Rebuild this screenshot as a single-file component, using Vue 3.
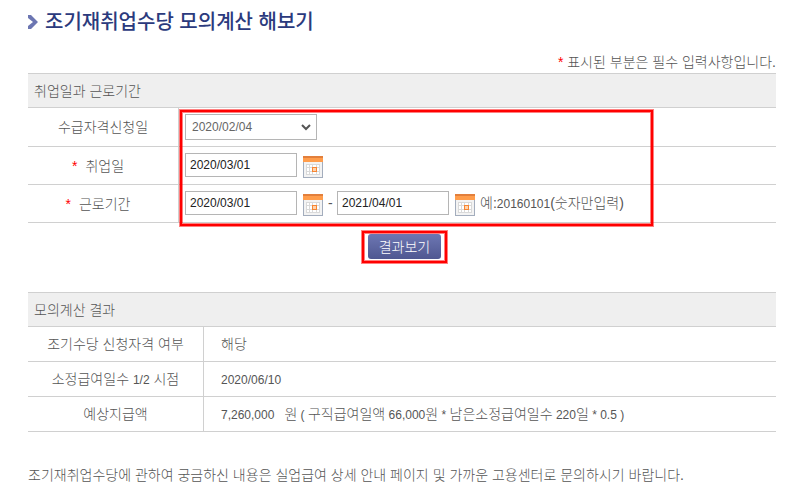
<script setup>
import { ref, h } from 'vue'

const applyDate = ref('2020/02/04')
const hireDate = ref('2020/03/01')
const workStart = ref('2020/03/01')
const workEnd = ref('2021/04/01')

const gridLines = [
  ...[3, 6, 9, 13, 16].map((x) => h('rect', { x, y: 8, width: 1, height: 11 })),
  ...[8, 11, 15, 18].map((y) => h('rect', { x: 3, y, width: 14, height: 1 }))
]

const CalendarIcon = () =>
  h('svg', { class: 'cal-icon', width: 20, height: 22, viewBox: '0 0 20 22', 'shape-rendering': 'crispEdges', 'aria-hidden': 'true' }, [
    h('rect', { width: 20, height: 22, fill: '#a3adbd' }),
    h('rect', { x: 1, y: 6, width: 18, height: 15, fill: '#f3f3f3' }),
    h('rect', { x: 3, y: 8, width: 14, height: 11, fill: '#ffffff' }),
    h('g', { fill: '#d9d9d9' }, gridLines),
    h('rect', { width: 20, height: 6, fill: '#ff9d4c' }),
    h('rect', { width: 20, height: 2, fill: '#e27f3c' }),
    h('rect', { x: 9, y: 11, width: 5, height: 5, fill: '#f78532' }),
    h('rect', { x: 10, y: 12, width: 3, height: 3, fill: '#ffd3ac' })
  ])
</script>

<template>
  <main class="page">
    <h1 class="title">
      <svg class="chevron" width="10" height="14" viewBox="0 0 10 14" aria-hidden="true">
        <path d="M0 0H3L10 7L3 14H0V11L5 7L0 3Z" fill="#6c76b2" />
      </svg>
      조기재취업수당 모의계산 해보기
    </h1>

    <p class="notice"><span class="star">*</span> 표시된 부분은 필수 입력사항입니다.</p>

    <form @submit.prevent>
      <div class="fields">
        <table class="grid form-grid">
          <thead>
            <tr><th colspan="2" class="head">취업일과 근로기간</th></tr>
          </thead>
          <tbody>
            <tr class="first">
              <th><label for="apply">수급자격신청일</label></th>
              <td>
                <div class="select-box">
                  <select id="apply" v-model="applyDate">
                    <option>2020/02/04</option>
                  </select>
                  <svg class="arrow" width="10" height="7" viewBox="0 0 10 7" aria-hidden="true">
                    <path d="M1 1L5 5L9 1" fill="none" stroke="#555" stroke-width="2" />
                  </svg>
                </div>
              </td>
            </tr>
            <tr>
              <th class="required"><span class="star">*</span><label for="hire">취업일</label></th>
              <td>
                <div class="line">
                  <input id="hire" v-model="hireDate" type="text" />
                  <button type="button" class="cal" aria-label="취업일 선택"><CalendarIcon /></button>
                </div>
              </td>
            </tr>
            <tr>
              <th class="required"><span class="star">*</span><label for="start">근로기간</label></th>
              <td>
                <div class="line">
                  <input id="start" v-model="workStart" type="text" />
                  <button type="button" class="cal" aria-label="시작일 선택"><CalendarIcon /></button>
                  <span class="dash">-</span>
                  <input v-model="workEnd" type="text" aria-label="근로기간 종료일" />
                  <button type="button" class="cal" aria-label="종료일 선택"><CalendarIcon /></button>
                  <span class="example">예:<span class="num">20160101</span>(숫자만입력)</span>
                </div>
              </td>
            </tr>
          </tbody>
        </table>
        <div class="mark"></div>
      </div>

      <div class="actions">
        <div class="button-mark"><button type="submit" class="submit">결과보기</button></div>
      </div>
    </form>

    <table class="grid result-grid">
      <thead>
        <tr><th colspan="2" class="head">모의계산 결과</th></tr>
      </thead>
      <tbody>
        <tr><th>조기수당 신청자격 여부</th><td>해당</td></tr>
        <tr><th>소정급여일수 <span class="num">1/2</span> 시점</th><td><span class="num">2020/06/10</span></td></tr>
        <tr>
          <th>예상지급액</th>
          <td><span class="num">7,260,000 &nbsp; </span>원<span class="num"> ( </span>구직급여일액<span class="num"> 66,000</span>원<span class="num"> * </span>남은소정급여일수<span class="num"> 220</span>일<span class="num"> * 0.5 )</span></td>
        </tr>
      </tbody>
    </table>

    <p class="footnote">조기재취업수당에 관하여 궁금하신 내용은 실업급여 상세 안내 페이지 및 가까운 고용센터로 문의하시기 바랍니다.</p>
  </main>
</template>

<style>
body {
  background: #fff;
}
.cal-icon {
  display: block;
}
</style>

<style scoped>
.page {
  padding: 8px 26px 0 28px;
  color: #555;
  font: 300 14px/20px "Liberation Sans", "Noto Sans CJK KR", sans-serif;
}
.title {
  display: flex;
  align-items: center;
  gap: 7px;
  margin: 0;
  color: #2b3a7d;
  font-size: 20px;
  font-weight: 500;
  line-height: 28px;
}
.chevron {
  flex: none;
}
.notice {
  margin: 16px 0 1px;
  text-align: right;
}
.star {
  color: #f00;
}
.num {
  font-size: 12px;
}
.fields {
  position: relative;
}
.grid {
  width: 100%;
  border-collapse: separate;
  border-spacing: 0;
  border-top: 1px solid #d0d0d0;
}
th,
td {
  box-sizing: border-box;
  height: 38px;
  padding: 0;
  border-bottom: 1px solid #d0d0d0;
  font-weight: inherit;
}
tbody th {
  border-right: 1px solid #d0d0d0;
}
thead .head {
  height: 34px;
  padding-left: 6px;
  background: #efefef;
  text-align: left;
}
.first th,
.first td {
  height: 39px;
}
.form-grid tbody th {
  width: 151px;
}
.form-grid td {
  padding-left: 6px;
}
.form-grid .required {
  padding-right: 10px;
}
.required .star {
  margin-right: 8px;
}
.result-grid tbody th {
  width: 176px;
}
.result-grid tbody th,
.result-grid td {
  height: 35px;
}
.result-grid td {
  padding-left: 17px;
}
.select-box {
  position: relative;
  width: 132px;
}
select,
input {
  box-sizing: border-box;
  margin: 0;
  border: 1px solid #b5b5b5;
  border-radius: 0;
  background: #fff;
  font: 12px/16px "Liberation Sans", "Noto Sans CJK KR", sans-serif;
}
select {
  display: block;
  width: 100%;
  height: 26px;
  padding: 0 20px 0 6px;
  appearance: none;
  color: #666;
}
.arrow {
  position: absolute;
  top: 10px;
  right: 6px;
  pointer-events: none;
}
.line {
  display: flex;
  align-items: flex-start;
  line-height: 24px;
}
input {
  width: 112px;
  height: 24px;
  padding: 0 4px;
  color: #222;
}
.cal {
  margin: 3px 5px 0 6px;
  padding: 0;
  border: 0;
  background: none;
}
.dash {
  width: 9px;
}
.mark {
  position: absolute;
  top: 37px;
  bottom: -3px;
  left: 152px;
  width: 473px;
  box-sizing: border-box;
  pointer-events: none;
}
.mark,
.button-mark {
  border: 2px solid #f00;
  box-shadow: 0 0 0 1px rgba(255, 0, 0, 0.5), inset 0 0 0 1px rgba(255, 0, 0, 0.5);
}
.actions {
  display: flex;
  justify-content: center;
  padding: 8px 0 29px 5px;
}
.button-mark {
  padding: 1px 4px 2px;
}
.submit {
  display: block;
  width: 73px;
  height: 25px;
  padding: 0;
  border: 0;
  border-radius: 3px;
  background: linear-gradient(#6d77b3, #4f5791);
  color: #fff;
  font: inherit;
}
.footnote {
  margin: 33px 0 0;
}
</style>
